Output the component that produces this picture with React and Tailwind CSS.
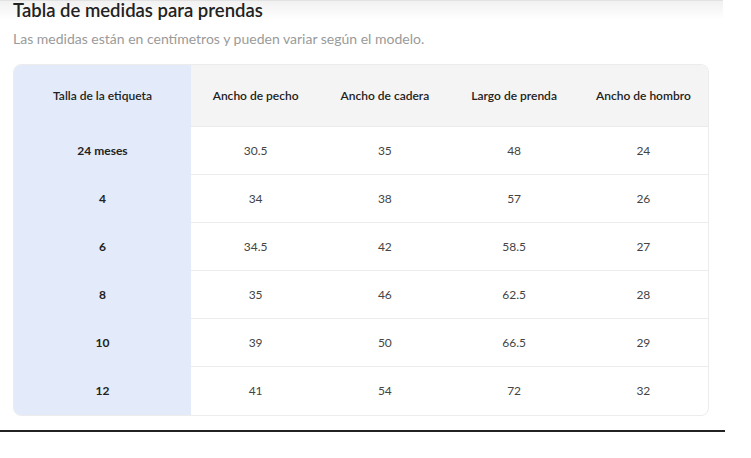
import React from "react";

const rows = [
  ["24 meses", "30.5", "35", "48", "24"],
  ["4", "34", "38", "57", "26"],
  ["6", "34.5", "42", "58.5", "27"],
  ["8", "35", "46", "62.5", "28"],
  ["10", "39", "50", "66.5", "29"],
  ["12", "41", "54", "72", "32"],
];
const heads = ["Ancho de pecho", "Ancho de cadera", "Largo de prenda", "Ancho de hombro"];

export default function App() {
  return (
    <div className="relative w-[751px] h-[458px] bg-white overflow-hidden" style={{ fontFamily: "Lato, 'Open Sans', sans-serif" }}>
      <div className="absolute left-0 top-0 w-[723px] h-[20px] border-t border-[#e2e2e2] bg-gradient-to-b from-[#f1f1f1] to-white" />
      <div className="relative pl-[13px]">
        <h1 className="text-[18.5px] leading-[20px] font-semibold text-[#222]">Tabla de medidas para prendas</h1>
        <p className="mt-[10px] text-[14px] leading-[18px] text-[#9a9a9a]">Las medidas están en centímetros y pueden variar según el modelo.</p>
        <div className="mt-[16px] w-[696px] rounded-[8px] border border-[#ececec] overflow-hidden flex text-[12px] text-[#333]">
          <div className="w-[177px] bg-[#e3ebfa] flex flex-col">
            <div className="h-[62px] flex items-center justify-center font-semibold text-[#222]">Talla de la etiqueta</div>
            {rows.map((r) => (
              <div key={r[0]} className="h-[48px] flex items-center justify-center font-bold text-[#222]">{r[0]}</div>
            ))}
          </div>
          <div className="flex-1 flex flex-col">
            <div className="h-[62px] bg-[#f4f4f4] grid grid-cols-4 border-b border-[#ebebeb]">
              {heads.map((h) => (
                <div key={h} className="flex items-center justify-center font-semibold text-[#222]">{h}</div>
              ))}
            </div>
            {rows.map((r, i) => (
              <div key={i} className={"h-[48px] grid grid-cols-4 " + (i < rows.length - 1 ? "border-b border-[#ececec]" : "")}>
                {r.slice(1).map((v, j) => (
                  <div key={j} className="flex items-center justify-center text-[#444]">{v}</div>
                ))}
              </div>
            ))}
          </div>
        </div>
      </div>
      <div className="absolute left-0 top-[430px] w-[725px] h-[2px] bg-[#222]" />
    </div>
  );
}
